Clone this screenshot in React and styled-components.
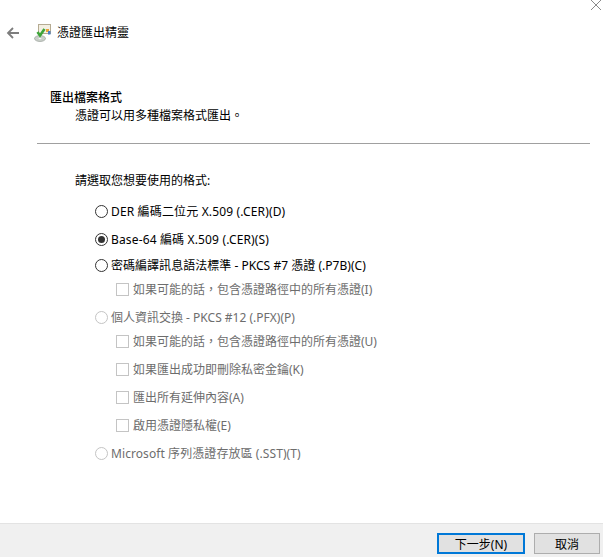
import React from 'react';
import styled, { createGlobalStyle } from 'styled-components';

const GlobalStyle = createGlobalStyle`
  html, body {
    margin: 0;
    padding: 0;
    background: #fff;
  }
  body {
    font-family: "Noto Sans", "Noto Sans CJK TC", sans-serif;
    font-size: 12px;
    color: #000;
  }
`;

const Window = styled.div`
  width: 603px;
  height: 557px;
  display: flex;
  flex-direction: column;
  overflow: hidden;
  position: relative;
`;

const CloseGlyph = styled.svg`
  position: absolute;
  top: 0;
  right: 2px;
  width: 10px;
  height: 10px;
`;

const Body = styled.div`
  flex: 1;
  display: flex;
  flex-direction: column;
`;

const TitleBar = styled.div`
  display: flex;
  align-items: center;
  height: 20px;
  margin-top: 23px;
  padding-left: 6px;
`;

const BackArrow = styled.svg`
  width: 14px;
  height: 14px;
  margin-right: 14px;
`;

const WizardIcon = styled.svg`
  width: 18px;
  height: 18px;
  margin-right: 5px;
`;

const Title = styled.span`
  font-size: 12px;
  line-height: 20px;
  color: #000;
`;

const Header = styled.div`
  margin-top: 46px;
  padding-left: 50px;
`;

const Heading = styled.div`
  font-size: 12px;
  line-height: 18px;
  font-weight: 500;
`;

const SubHeading = styled.div`
  font-size: 12px;
  line-height: 18px;
  padding-left: 25px;
  color: #000;
`;

const Divider = styled.hr`
  margin: 18px 13px 0 37px;
  height: 1px;
  border: 0;
  background: #a0a0a0;
`;

const Prompt = styled.div`
  margin: 28px 0 0 75px;
  line-height: 18px;
  color: #000;
`;

const Options = styled.div`
  display: flex;
  flex-direction: column;
  margin-top: 12px;
  padding-left: 95px;
`;

const Row = styled.label`
  display: flex;
  align-items: center;
  height: 18px;
  margin-top: ${(p) => p.$gap}px;
  padding-left: ${(p) => (p.$nested ? 21 : 0)}px;
  color: ${(p) => (p.$disabled ? '#6d6d6d' : '#000')};
  letter-spacing: ${(p) => p.$tracking || 0}px;
  white-space: nowrap;
`;

const RadioMark = styled.span`
  box-sizing: border-box;
  width: 13px;
  height: 13px;
  border-radius: 50%;
  border: 1px solid ${(p) => (p.$disabled ? '#c4c4c4' : '#333')};
  margin-right: 3px;
  display: flex;
  align-items: center;
  justify-content: center;
  flex: none;

  &::after {
    content: '';
    display: ${(p) => (p.$checked ? 'block' : 'none')};
    width: 7px;
    height: 7px;
    border-radius: 50%;
    background: #333;
  }
`;

const CheckMark = styled.span`
  box-sizing: border-box;
  width: 13px;
  height: 13px;
  border: 1px solid #c4c4c4;
  margin-right: 4px;
  flex: none;
`;

const Footer = styled.div`
  box-sizing: border-box;
  height: 34px;
  background: #f0f0f0;
  border-top: 1px solid #e3e3e3;
  display: flex;
  justify-content: flex-end;
  align-items: flex-start;
  gap: 9px;
  padding: 9px 3px 0 0;
`;

const Button = styled.div`
  box-sizing: border-box;
  height: 21px;
  width: ${(p) => p.$width}px;
  background: #e1e1e1;
  border: ${(p) => (p.$primary ? '2px solid #0078d7' : '1px solid #adadad')};
  display: flex;
  align-items: center;
  justify-content: center;
  font-size: 12px;
  color: #000;
`;

const options = [
  { type: 'radio', text: 'DER 編碼二位元 X.509 (.CER)(D)', gap: 0, tracking: 0.15 },
  { type: 'radio', text: 'Base-64 編碼 X.509 (.CER)(S)', gap: 10, tracking: 0.15, checked: true },
  { type: 'radio', text: '密碼編譯訊息語法標準 - PKCS #7 憑證 (.P7B)(C)', gap: 8, tracking: 0.03 },
  { type: 'check', text: '如果可能的話，包含憑證路徑中的所有憑證(I)', gap: 6, disabled: true },
  { type: 'radio', text: '個人資訊交換 - PKCS #12 (.PFX)(P)', gap: 10, disabled: true },
  { type: 'check', text: '如果可能的話，包含憑證路徑中的所有憑證(U)', gap: 6, disabled: true },
  { type: 'check', text: '如果匯出成功即刪除私密金鑰(K)', gap: 10, disabled: true },
  { type: 'check', text: '匯出所有延伸內容(A)', gap: 10, disabled: true },
  { type: 'check', text: '啟用憑證隱私權(E)', gap: 10, disabled: true },
  { type: 'radio', text: 'Microsoft 序列憑證存放區 (.SST)(T)', gap: 10, tracking: 0.08, disabled: true },
];

const App = () => (
  <Window>
    <GlobalStyle />
    <CloseGlyph viewBox="0 0 10 10">
      <path d="M0 0 L10 10 M10 0 L0 10" stroke="#8a8a8a" strokeWidth="1" fill="none" />
    </CloseGlyph>
    <Body>
      <TitleBar>
        <BackArrow viewBox="0 0 14 14">
          <path d="M13 7 H2 M7 2 L2 7 L7 12" stroke="#7d7d7d" strokeWidth="1.8" fill="none" />
        </BackArrow>
        <WizardIcon viewBox="0 0 18 18">
          <rect x="4.5" y="0.5" width="12" height="9" fill="#f3efe2" stroke="#b5ab92" />
          <rect x="12" y="5" width="3" height="3" fill="#e8a33a" />
          <rect x="14" y="7" width="2.5" height="3.5" fill="#4a7fc4" />
          <ellipse cx="6" cy="14.5" rx="5.5" ry="3" fill="#c9cfc9" stroke="#8f968f" strokeWidth="0.6" />
          <ellipse cx="6" cy="14.5" rx="1.5" ry="0.8" fill="#f5f5f5" />
          <path d="M3.5 8 L6 11.5 L10.5 5" stroke="#3ea53a" strokeWidth="2.6" fill="none" />
        </WizardIcon>
        <Title>憑證匯出精靈</Title>
      </TitleBar>
      <Header>
        <Heading>匯出檔案格式</Heading>
        <SubHeading>憑證可以用多種檔案格式匯出。</SubHeading>
      </Header>
      <Divider />
      <Prompt>請選取您想要使用的格式:</Prompt>
      <Options>
        {options.map((o) => (
          <Row
            key={o.text}
            $gap={o.gap}
            $nested={o.type === 'check'}
            $disabled={o.disabled}
            $tracking={o.tracking}
          >
            {o.type === 'radio' ? (
              <RadioMark $checked={o.checked} $disabled={o.disabled} />
            ) : (
              <CheckMark />
            )}
            {o.text}
          </Row>
        ))}
      </Options>
    </Body>
    <Footer>
      <Button $primary $width={88}>下一步(N)</Button>
      <Button $width={66}>取消</Button>
    </Footer>
  </Window>
);

export default App;
